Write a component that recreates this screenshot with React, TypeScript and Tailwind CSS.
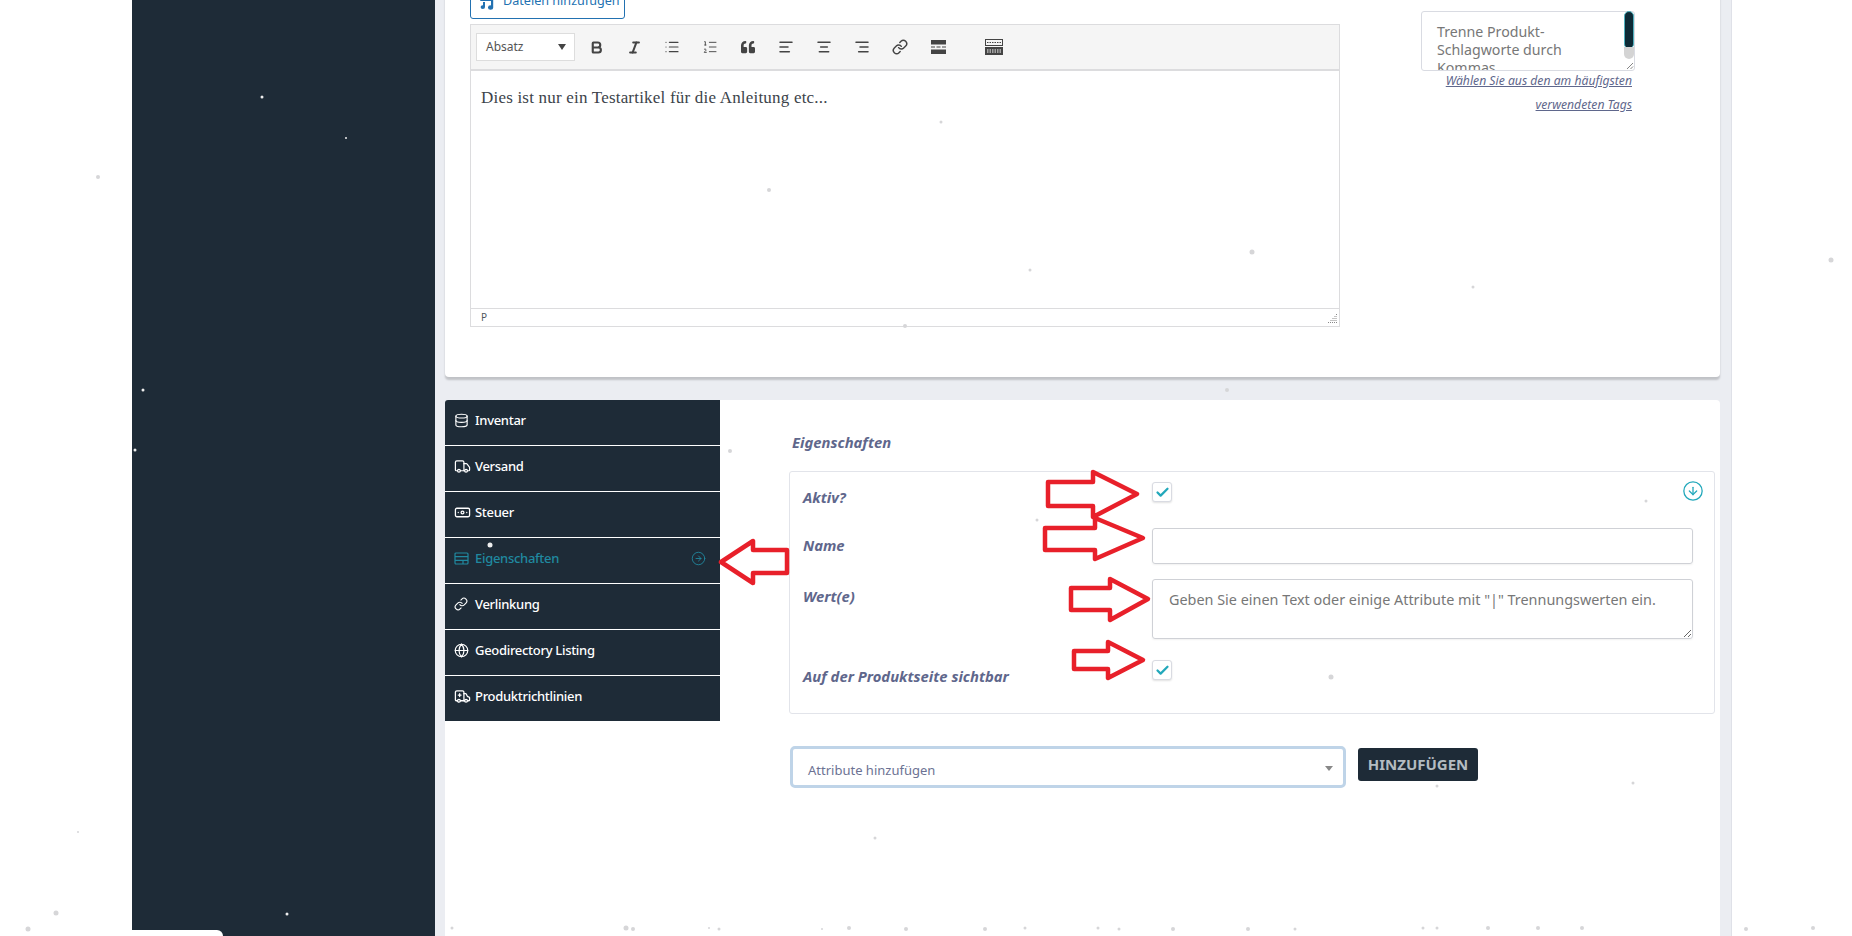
import { AlignCenter, AlignLeft, AlignRight, Ambulance, Banknote, Bold, Check, CircleArrowDown, CircleArrowRight, Database, Globe, Italic, Link, List, ListOrdered, Truck } from "lucide-react";
import { FaQuoteLeft } from "react-icons/fa";
import type { ReactNode } from "react";

const uiFont = "font-['Noto_Sans',sans-serif]";

const tabs = [
  { label: "Inventar", icon: <Database size={15} strokeWidth={1.8} /> },
  { label: "Versand", icon: <Truck size={17} strokeWidth={1.7} /> },
  { label: "Steuer", icon: <Banknote size={17} strokeWidth={1.8} /> },
  { label: "Eigenschaften", icon: <PropsIcon />, active: true },
  { label: "Verlinkung", icon: <Link size={14} strokeWidth={1.9} /> },
  { label: "Geodirectory Listing", icon: <Globe size={15} strokeWidth={1.9} /> },
  { label: "Produktrichtlinien", icon: <Ambulance size={17} strokeWidth={1.8} /> },
];

const arrows = [
  "721,562 753,541 753,550 787,550 787,573 753,573 753,583",
  "1048,482 1093,482 1093,472 1137,494 1093,517 1093,506 1048,506",
  "1045,528 1095,528 1095,518 1143,538 1095,559 1095,550 1045,550",
  "1071,588 1110,588 1110,579 1148,599 1110,620 1110,610 1071,610",
  "1074,651 1108,651 1108,642 1143,660 1108,678 1108,669 1074,669",
];

const grayDots = [
  [98, 177, 2], [941, 122, 1.5], [769, 190, 2], [1252, 252, 2.5], [1030, 270, 1.5], [1473, 287, 1.5],
  [1831, 260, 2.5], [905, 326, 2], [1227, 390, 2], [730, 451, 2], [1037, 520, 1.5], [1646, 501, 1.5],
  [1331, 677, 2.5], [1633, 783, 1.5], [1437, 786, 1.5], [875, 838, 1.5], [78, 832, 1], [56, 913, 2.5],
  [28, 929, 2.5], [452, 928, 1.5], [626, 928, 2.5], [633, 929, 2], [709, 928, 1], [719, 929, 1.5],
  [822, 929, 1], [849, 928, 2], [906, 929, 2], [985, 929, 2], [1025, 928, 1.5], [1098, 928, 1.5],
  [1119, 929, 1.5], [1173, 929, 2], [1248, 929, 2], [1295, 929, 1.5], [1423, 928, 1.5], [1437, 928, 1.5],
  [1488, 928, 2], [1538, 928, 2], [1582, 928, 2], [1746, 929, 2], [1813, 928, 2],
];
const whiteDots = [
  [262, 97, 1.5], [346, 138, 1], [143, 390, 1.5], [135, 450, 1.5], [287, 914, 1.5], [490, 545, 2.5],
];

function PropsIcon() {
  return (
    <svg width="15" height="15" viewBox="0 0 15 15" fill="none" stroke="currentColor" strokeWidth="1.2">
      <rect x="1" y="2" width="13" height="11" rx="1" />
      <path d="M1 5.7h13M1 9.3h13M9 9.3V13" />
    </svg>
  );
}

function MediaIcon() {
  return (
    <svg width="17" height="19" viewBox="0 0 17 19" fill="#2271b1" className="shrink-0">
      <rect x="0" y="0" width="12" height="9" rx="1" />
      <path d="M11 7h2.2v8.5a2.6 2.2 0 1 1-2.2-2.1V7z" />
      <path d="M3 10h2v5a2.2 1.9 0 1 1-2-1.8V10z" />
    </svg>
  );
}

function ReadMoreIcon() {
  return (
    <svg width="15" height="14" viewBox="0 0 15 14" fill="#444">
      <rect x="0" y="0" width="15" height="4.5" />
      <rect x="0" y="9.5" width="15" height="4.5" />
      <path d="M0 6.5h4v1H0zM5.5 6.5h4v1h-4zM11 6.5h4v1h-4z" />
    </svg>
  );
}

function KitchenSinkIcon() {
  return (
    <svg width="18" height="16" viewBox="0 0 18 16" fill="none" stroke="#444" strokeWidth="1">
      <rect x="0.5" y="0.5" width="17" height="6" />
      <rect x="0.5" y="8.5" width="17" height="7" fill="#444" />
      <path d="M2 3.5h14" strokeDasharray="1.5 1" />
      <path d="M2 11h14M2 13h14" stroke="#fff" strokeDasharray="1.5 1" />
    </svg>
  );
}

function FieldCheckbox() {
  return (
    <div className="flex h-5 w-5 items-center justify-center rounded-[3px] border border-[#d9dbe2] bg-white shadow-[0_1px_2px_rgba(0,0,0,0.12)]">
      <Check size={15} strokeWidth={3.6} className="text-[#22a8bb]" />
    </div>
  );
}

function FieldRow({ label, labelClass, className, children }: { label: string; labelClass: string; className: string; children: ReactNode }) {
  return (
    <div className={`flex ${className}`}>
      <div className={`w-[349px] text-[14.8px] leading-5 font-bold text-[#5f678c] italic ${labelClass}`}>{label}</div>
      <div className="w-[541px]">{children}</div>
    </div>
  );
}

export default function App() {
  const toolbarIcon = "flex h-7 w-[38px] items-center justify-center text-[#444]";

  return (
    <div className={`relative flex h-[936px] w-[1852px] overflow-hidden bg-white ${uiFont}`}>
      <div className="w-[132px] shrink-0" />

      <aside className="relative w-[303px] shrink-0 bg-[#1e2b37]">
        <div className="absolute bottom-0 left-0 h-[6px] w-[91px] rounded-tr-[8px] bg-white" />
      </aside>

      <main className="flex w-[1297px] shrink-0 flex-col border-r border-[#dfe1e8] bg-[#ebedf2] pr-[11px] pl-[10px]">
        {/* Top card, scrolled partly out of the window */}
        <section className="-mt-[40px] flex h-[417px] shrink-0 rounded-b-[4px] bg-white pt-[29px] pl-[25px] shadow-[0_3px_2px_rgba(0,0,0,0.18)]">
          <div className="w-[870px] shrink-0">
            <button className="flex h-[30px] w-[155px] items-center gap-[6px] rounded-[3px] border border-[#2271b1] pb-[6px] pl-[9px] text-[12.6px] text-[#2271b1]">
              <MediaIcon />
              Dateien hinzufügen
            </button>

            <div className="mt-[5px] flex h-[303px] flex-col border border-[#dcdcde]">
              <div className="flex h-[46px] shrink-0 items-center border-b-2 border-[#dcdcde] bg-[#f5f5f5] pl-[5px]">
                <div className="flex h-7 w-[99px] items-center justify-between border border-[#dddddd] bg-white pr-2 pl-[9px] text-[12px] text-[#555]">
                  Absatz
                  <span className="h-0 w-0 border-x-4 border-t-[6px] border-x-transparent border-t-[#444]" />
                </div>
                <div className="ml-[2px] flex items-center">
                  <span className={toolbarIcon}><Bold size={15} strokeWidth={3.4} /></span>
                  <span className={toolbarIcon}><Italic size={15} strokeWidth={3.4} /></span>
                  <span className={toolbarIcon}><List size={16} strokeWidth={1.7} /></span>
                  <span className={toolbarIcon}><ListOrdered size={16} strokeWidth={1.4} /></span>
                  <span className={toolbarIcon}><FaQuoteLeft size={14} /></span>
                  <span className={toolbarIcon}><AlignLeft size={16} strokeWidth={2.3} /></span>
                  <span className={toolbarIcon}><AlignCenter size={16} strokeWidth={2.3} /></span>
                  <span className={toolbarIcon}><AlignRight size={16} strokeWidth={2.3} /></span>
                  <span className={toolbarIcon}><Link size={16} strokeWidth={2.2} /></span>
                  <span className={toolbarIcon}><ReadMoreIcon /></span>
                  <span className={`${toolbarIcon} ml-[18px]`}><KitchenSinkIcon /></span>
                </div>
              </div>
              <div className="flex-1 pt-[15px] pl-[10px] font-['Liberation_Serif',serif] text-[17px] leading-6 tracking-[0.2px] text-[#3c434a]">
                Dies ist nur ein Testartikel für die Anleitung etc...
              </div>
              <div className="flex h-[18px] shrink-0 items-center justify-between border-t border-[#dcdcde] pr-[2px] pl-[10px] text-[10px] text-[#50575e]">
                P
                <svg width="10" height="10" viewBox="0 0 10 10" stroke="#888" strokeWidth="1" strokeDasharray="1 1">
                  <path d="M1 9.5h9M3.5 7.5h6.5M5.5 5.5h4.5M7.5 3.5h2.5M9 1.5h1" />
                </svg>
              </div>
            </div>
          </div>

          <div className="ml-[81px] w-[214px] pt-[22px]">
            <div className="relative h-[60px] w-[214px]">
              <textarea
                readOnly
                placeholder="Trenne Produkt-Schlagworte durch Kommas"
                className="block h-full w-full resize-none overflow-hidden rounded-[3px] border border-[#d9dbe2] py-[11px] pr-[34px] pl-[15px] text-[14.2px] leading-[18px] text-[#777] outline-none placeholder:text-[#777]"
              />
              <div className="absolute top-0 right-[1px] h-[38px] w-[10px] rounded-[5px] border border-[#4fb0bd] bg-[#0d2a36]" />
              <div className="absolute top-[36px] right-[1px] h-[12px] w-[10px] rounded-b-[5px] bg-[#d4d4d4]" />
              <svg width="9" height="9" viewBox="0 0 9 9" stroke="#666" strokeWidth="0.8" className="absolute right-[1px] bottom-[1px]">
                <path d="M2 8L8 2M5.5 8L8 5.5" />
              </svg>
            </div>
            <div className="-mt-[2px] w-[211px] text-right text-[12.2px] leading-6 text-[#5f678c] italic underline">
              Wählen Sie aus den am häufigsten verwendeten Tags
            </div>
          </div>
        </section>

        {/* Product data panel */}
        <section className="mt-[23px] flex flex-1 rounded-t-[4px] bg-white">
          <nav className="w-[275px] shrink-0">
            {tabs.map((tab, i) => (
              <div
                key={tab.label}
                className={`flex items-start bg-[#1e2b37] pt-[10px] pr-[14px] pl-[9px] text-[13px] leading-5 font-medium tracking-[-0.3px] ${i < tabs.length - 1 ? "h-[46px] border-b border-white" : "h-[45px]"} ${i === 0 ? "rounded-tl-[3px]" : ""} ${tab.active ? "text-[#2089a0]" : "text-white"}`}
              >
                <span className="flex h-5 w-[21px] shrink-0 items-center">{tab.icon}</span>
                <span className="flex-1">{tab.label}</span>
                {tab.active && <CircleArrowRight size={15} strokeWidth={1.4} className="mt-[3px]" />}
              </div>
            ))}
          </nav>

          <div className="flex-1 pt-[32px] pr-[5px] pl-[69px]">
            <h3 className="mb-[19px] pl-[3px] text-[14.8px] leading-5 font-bold text-[#5f678c] italic">Eigenschaften</h3>

            <div className="relative h-[243px] rounded-[3px] border border-[#e2e4ea] pl-[13px]">
              <CircleArrowDown size={22} strokeWidth={1.4} className="absolute top-[8px] right-[10px] text-[#22a8bb]" />
              <FieldRow label="Aktiv?" labelClass="pt-[5px]" className="mt-[10px]">
                <FieldCheckbox />
              </FieldRow>
              <FieldRow label="Name" labelClass="pt-[7px]" className="mt-[21px]">
                <input className="block h-[36px] w-full rounded-[3px] border border-[#cfd1d6] shadow-[0_1px_2px_rgba(0,0,0,0.06)]" />
              </FieldRow>
              <FieldRow label="Wert(e)" labelClass="pt-[7px]" className="mt-[15px]">
                <textarea
                  readOnly
                  placeholder={'Geben Sie einen Text oder einige Attribute mit "|" Trennungswerten ein.'}
                  className="block h-[60px] w-full rounded-[3px] border border-[#cfd1d6] px-4 py-[10px] text-[14.4px] leading-5 text-[#777] shadow-[0_1px_2px_rgba(0,0,0,0.06)] outline-none placeholder:text-[#777]"
                />
              </FieldRow>
              <FieldRow label="Auf der Produktseite sichtbar" labelClass="pt-[6px]" className="mt-[21px]">
                <FieldCheckbox />
              </FieldRow>
            </div>

            <div className="mt-[32px] ml-px flex items-start gap-3">
              <div className="flex h-[42px] w-[556px] items-center justify-between rounded-[5px] border-[3px] border-[#bfd4e8] pt-[8px] pr-[10px] pl-[15px] text-[13px] text-[#6c7293]">
                Attribute hinzufügen
                <span className="mb-[6px] h-0 w-0 border-x-4 border-t-[5px] border-x-transparent border-t-[#888]" />
              </div>
              <button className="mt-[2px] flex h-[33px] w-[120px] items-center justify-center rounded-[3px] bg-[#1e2b37] text-[15px] font-bold text-[#b4bcc2]">
                HINZUFÜGEN
              </button>
            </div>
          </div>
        </section>
      </main>

      {/* Red hints and the snow layer sit over everything */}
      <svg className="pointer-events-none absolute top-0 left-0" width="1852" height="936">
        {arrows.map((points) => (
          <polygon key={points} points={points} fill="white" stroke="#e8202a" strokeWidth="4.5" strokeLinejoin="round" />
        ))}
        {grayDots.map(([x, y, r], i) => (
          <circle key={i} cx={x} cy={y} r={r} fill="#d6d6d8" />
        ))}
        {whiteDots.map(([x, y, r], i) => (
          <circle key={i} cx={x} cy={y} r={r} fill="#eeeeee" />
        ))}
      </svg>
    </div>
  );
}
